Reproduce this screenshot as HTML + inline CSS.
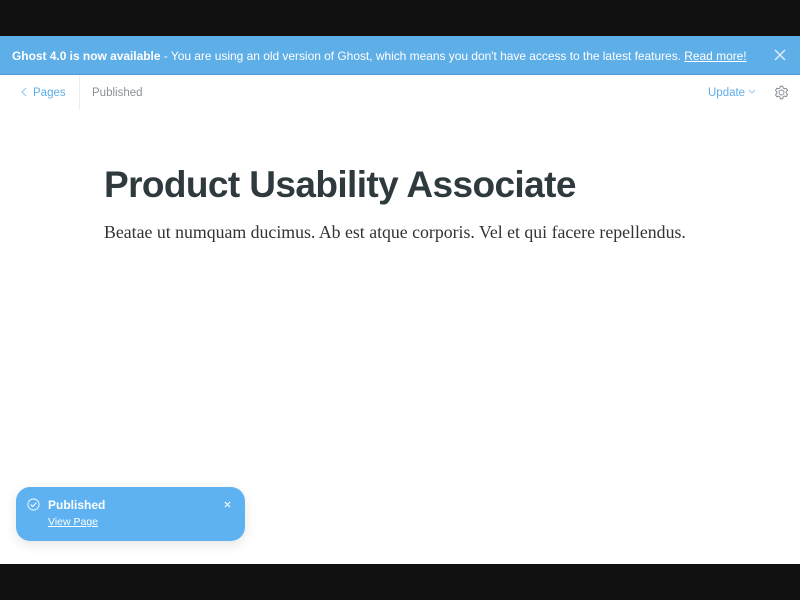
<!DOCTYPE html>
<html><head><style>
*{margin:0;padding:0;box-sizing:border-box}
body{width:800px;height:600px;background:#111;font-family:"Liberation Sans",sans-serif;position:relative;overflow:hidden}
.page{position:absolute;top:36px;left:0;width:800px;height:528px;background:#fff}
.banner{height:39px;background:#5eaee8;border-bottom:1px solid #4c9ad6;color:#fff;font-size:12px;letter-spacing:-0.035px;line-height:40px;padding-left:12px;position:relative}
.banner b{font-weight:bold}
.banner u{color:#fff}
.banner .x{position:absolute;right:14px;top:13px}
.nav{height:34px;position:relative;font-size:11.5px;line-height:37px}
.pages{position:absolute;left:20px;color:#5eaee8;padding-right:13px;border-right:1px solid #e5eff5;line-height:34px;top:1px}
.pub{position:absolute;left:92px;color:#8a9299}
.upd{position:absolute;left:708px;color:#5eaee8}
.gear{position:absolute;left:774px;top:10px}
h1{position:absolute;left:104px;top:128px;font-size:37px;font-weight:bold;color:#2f3a3f;letter-spacing:-0.6px;white-space:nowrap}
p.ex{position:absolute;left:104px;top:186px;font-family:"Liberation Serif",serif;font-size:17.8px;color:#333;white-space:nowrap}
.toast{position:absolute;left:16px;top:451px;width:229px;height:54px;background:#5eb2f2;border-radius:14px;box-shadow:0 4px 12px rgba(0,0,0,.1);color:#fff}
.toast .t{position:absolute;left:32px;top:11px;font-size:12px;font-weight:bold}
.toast .v{position:absolute;left:32px;top:29px;font-size:10.5px;text-decoration:underline}
</style></head><body>
<div class="page">
<div class="banner"><b>Ghost 4.0 is now available</b> - You are using an old version of Ghost, which means you don't have access to the latest features. <u>Read more!</u>
<svg class="x" width="12" height="12" viewBox="0 0 12 12"><path d="M1 1L11 11M11 1L1 11" stroke="#fff" stroke-width="1.3" opacity=".85"/></svg></div>
<div class="nav">
<span class="pages"><svg width="8" height="10" viewBox="0 0 8 10" style="vertical-align:-1px;margin-right:5px"><path d="M6 1L2 5L6 9" fill="none" stroke="#9cc9ec" stroke-width="1.2"/></svg>Pages</span>
<span class="pub">Published</span>
<span class="upd">Update <svg width="8" height="6" viewBox="0 0 8 6" style="vertical-align:1px"><path d="M1 1L4 4L7 1" fill="none" stroke="#9cc9ec" stroke-width="1"/></svg></span>
<svg class="gear" width="15" height="15" viewBox="0 0 24 24"><path d="M12 8a4 4 0 1 0 0 8a4 4 0 1 0 0-8z M10 2h4l.6 2.8 2.3 1.3 2.7-.9 2 3.4-2.1 1.9v2.8l2.1 1.9-2 3.4-2.7-.9-2.3 1.3L14 22h-4l-.6-2.8-2.3-1.3-2.7.9-2-3.4 2.1-1.9v-2.8L2.4 8.6l2-3.4 2.7.9 2.3-1.3z" fill="none" stroke="#808a91" stroke-width="1.5"/></svg>
</div>
<h1>Product Usability Associate</h1>
<p class="ex">Beatae ut numquam ducimus. Ab est atque corporis. Vel et qui facere repellendus.</p>
<div class="toast">
<svg style="position:absolute;left:11px;top:11px" width="13" height="13" viewBox="0 0 14 14"><circle cx="7" cy="7" r="6" fill="none" stroke="#fff" stroke-width="1.1" opacity=".85"/><path d="M4 7.2L6.2 9.2L10 5" fill="none" stroke="#fff" stroke-width="1.1"/></svg>
<span class="t">Published</span><span class="v">View Page</span>
<svg style="position:absolute;left:208px;top:14px" width="7" height="7" viewBox="0 0 8 8"><path d="M1 1L7 7M7 1L1 7" stroke="#fff" stroke-width="1.2"/></svg>
</div>
</div>
</body></html>
